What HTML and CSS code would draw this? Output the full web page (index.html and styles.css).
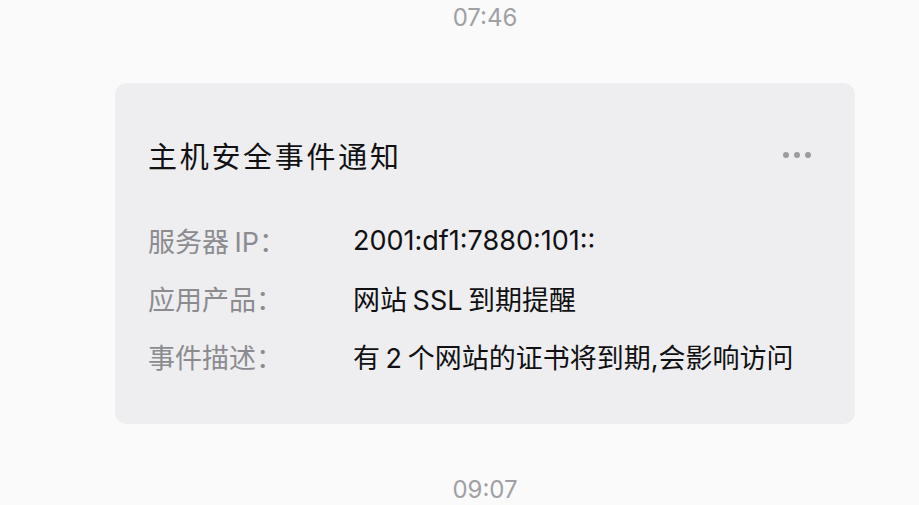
FILE: index.html
```html
<!DOCTYPE html>
<html lang="zh-CN">
<head>
  <meta charset="UTF-8">
  <meta name="viewport" content="width=device-width, initial-scale=1">
  <title>主机安全事件通知</title>
  <link rel="stylesheet" href="styles.css">
</head>

<body>

  <div class="chat">
    <div class="time">07:46</div>

    <div class="card">
      <div class="card-head">
        <div class="card-title">主机安全事件通知</div>
        <div class="more">
          <span></span><span></span><span></span>
        </div>
      </div>

      <div class="fields">
        <div class="label">服务器 IP：</div>
        <div class="value">2001:df1:7880:101::</div>

        <div class="label">应用产品：</div>
        <div class="value">网站 SSL 到期提醒</div>

        <div class="label">事件描述：</div>
        <div class="value">有 2 个网站的证书将到期,会影响访问</div>
      </div>
    </div>

    <div class="time time-next">09:07</div>
  </div>

</body>
</html>
```

FILE: styles.css
```css
:root {
  --bg-color: #fafafa;
  --card-bg: #eeeef0;
  --font-color: #111113;
  --label-color: #8b8b90;
  --time-color: #a0a0a5;
}

* { margin: 0; padding: 0; box-sizing: border-box; }

body {
  font-family: "Inter", "Noto Sans CJK SC", sans-serif;
  background-color: var(--bg-color);
  color: var(--font-color);
}

.chat {
  width: 740px;
  margin-left: 115px;
}

.time {
  text-align: center;
  font-size: 24px;
  line-height: 36px;
  color: var(--time-color);
}

.time-next {
  margin-top: 48px;
}

.card {
  margin-top: 47px;
  background: var(--card-bg);
  border-radius: 12px;
  padding: 52px 44px 39px 33px;
}

.card-head {
  display: flex;
  justify-content: space-between;
  align-items: center;
  height: 40px;
}

.card-title {
  font-size: 29px;
  letter-spacing: 2.7px;
}

.more {
  display: flex;
  gap: 5px;
}

.more span {
  width: 6px;
  height: 6px;
  border-radius: 50%;
  background: #9c9c9f;
}

.fields {
  display: grid;
  grid-template-columns: 205px 1fr;
  grid-auto-rows: 58px;
  align-items: center;
  margin-top: 36px;
  font-size: 27px;
  word-spacing: -2px;
}

.label {
  color: var(--label-color);
}
```
